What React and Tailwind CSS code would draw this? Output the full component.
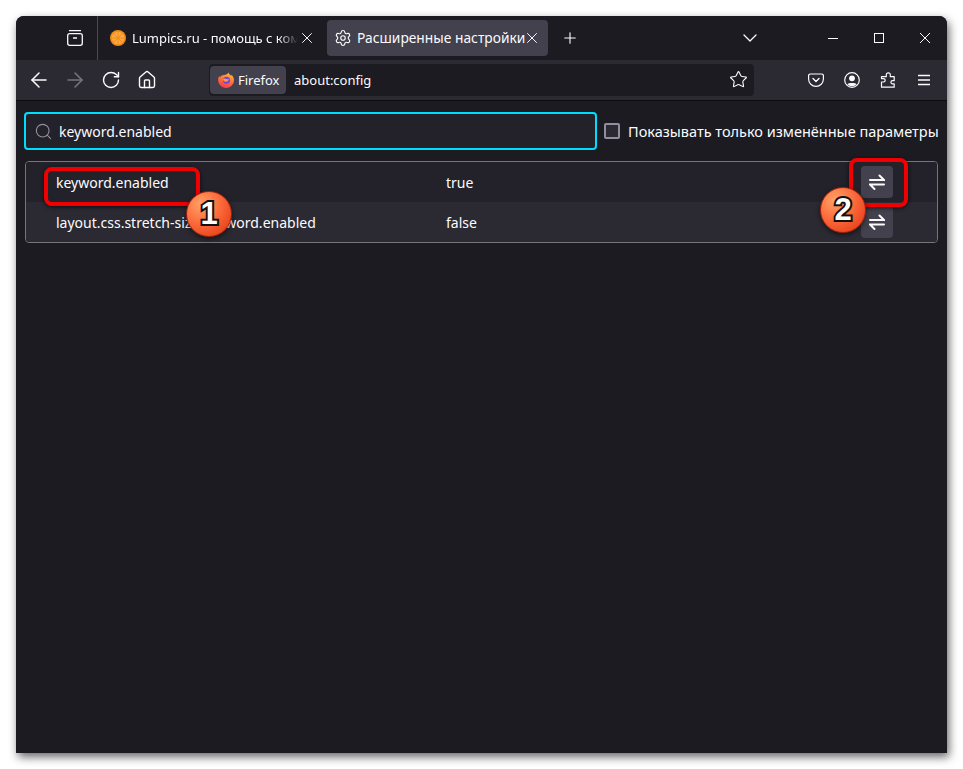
import { ArrowLeft, ArrowRight, ChevronDown, House, Plus, RotateCw, Search, Settings, Star, X } from "lucide-react";

function ViewIcon() {
  return (
    <svg width="18" height="18" viewBox="0 0 18 18" fill="none" stroke="#fbfbfe" strokeWidth="1.3">
      <path d="M3.5 1.700h11" strokeLinecap="round" />
      <rect x="1.700" y="4.700" width="14.600" height="11.600" rx="2" />
      <path d="M7 9h4" strokeWidth="1.500" />
    </svg>
  );
}

function OrangeIcon() {
  return (
    <svg width="16" height="16" viewBox="0 0 16 16">
      <circle cx="8" cy="8" r="8" fill="#ef8a1a" />
      <circle cx="8" cy="8" r="6.300" fill="#ffa93f" />
      <path d="M8 1.500v13M1.500 8h13M3.400 3.400l9.200 9.200M12.600 3.400l-9.200 9.200" stroke="#ef8a1a" strokeWidth="0.900" />
    </svg>
  );
}

function FirefoxIcon() {
  return (
    <svg width="16" height="16" viewBox="0 0 16 16">
      <defs>
        <linearGradient id="fx" x1="0.7" y1="0" x2="0.3" y2="1">
          <stop offset="0" stopColor="#ffc02e" />
          <stop offset="0.5" stopColor="#ff7139" />
          <stop offset="1" stopColor="#f0384f" />
        </linearGradient>
      </defs>
      <path d="M10.500.5c.3 1.700 1.600 2 2.600 3.200.3-.3.4-.5.5-.9C15 4.300 16 6 16 8.200A7.900 7.800 0 0 1 .1 8.200C.1 6.400.7 5 1.400 4c.1.600.4 1 .8 1.300C3 3.400 4.600 3.300 6 3.100 8 2.800 9.800 2 10.500.5z" fill="url(#fx)" />
      <circle cx="8.500" cy="8.300" r="3.500" fill="#7543e3" />
      <path d="M5 7.400c1-1.200 2.200-.9 3.300-.4 1.200.5 2 .3 2.600-.2-.2 2-1.500 3-3 2.900C6.500 9.600 5.500 8.800 5 7.400z" fill="#ff9a3c" />
    </svg>
  );
}

function PocketIcon() {
  return (
    <svg width="16" height="16" viewBox="0 0 16 16" fill="none" stroke="#fbfbfe" strokeWidth="1.200">
      <path d="M2.200 2h11.600A1.600 1.600 0 0 1 15.400 3.600V7A7.400 7.400 0 0 1 .6 7V3.600A1.600 1.600 0 0 1 2.200 2z" />
      <path d="M5 6.500l3 3 3-3" strokeLinecap="round" strokeLinejoin="round" strokeWidth="1.400" />
    </svg>
  );
}

function ProfileIcon() {
  return (
    <svg width="16" height="16" viewBox="0 0 16 16" fill="none">
      <circle cx="8" cy="8" r="7.300" stroke="#fbfbfe" strokeWidth="1.200" />
      <circle cx="8" cy="6.300" r="2.900" fill="#fbfbfe" />
      <path d="M3.300 12.200c1-1.700 8.400-1.700 9.400 0-1.400 1.300-2.900 2-4.700 2s-3.300-.7-4.700-2z" fill="#fbfbfe" />
    </svg>
  );
}

function PuzzleIcon() {
  return (
    <svg width="16" height="16" viewBox="0 0 16 16" fill="none" stroke="#fbfbfe" strokeWidth="1.200" strokeLinejoin="round">
      <path d="M1.500 15.200V10h2a1.700 1.700 0 0 0 0-3.400h-2V4.700h4.800V3a2 2 0 0 1 2-2.200 2 2 0 0 1 2 2.200v1.700h3.900v4h-1.700a1.600 1.600 0 0 0 0 3.200h1.700v3.300z" />
    </svg>
  );
}

function MenuIcon() {
  return (
    <svg width="16" height="16" viewBox="0 0 16 16" stroke="#fbfbfe" strokeWidth="1.300">
      <path d="M2 3.500h12M2 8h12M2 12.500h12" />
    </svg>
  );
}

function ToggleIcon() {
  return (
    <svg width="16" height="16" viewBox="0 0 16 16" fill="none" stroke="#fbfbfe" strokeWidth="2" strokeLinecap="round">
      <path d="M1 6h14l-4.500-4.500" />
      <path d="M15 10.500H1l4.500 4.500" />
    </svg>
  );
}

function WindowControl({ className, children }) {
  return (
    <div className={`flex justify-center ${className}`}>
      <svg width="12" height="12" viewBox="0 0 12 12" fill="none" stroke="#fbfbfe" strokeWidth="1">
        {children}
      </svg>
    </div>
  );
}

function NavButton({ children, className = "" }) {
  return <div className={`flex h-8 w-9 shrink-0 items-center justify-center ${className}`}>{children}</div>;
}

function Badge({ label, className }) {
  return (
    <div
      className={`absolute flex h-[46px] w-[46px] items-center justify-center rounded-full border border-[#a5200a] bg-[radial-gradient(circle_at_32%_28%,#ffa268_0%,#fb6a3a_45%,#e0300f_100%)] font-['Liberation_Sans',sans-serif] text-[31px] font-bold text-white shadow-[0_2px_5px_rgba(0,0,0,0.55)] [-webkit-text-stroke:4px_#111] [paint-order:stroke_fill] ${className}`}
    >
      {label}
    </div>
  );
}

function ConfigRow({ name, value, className }) {
  return (
    <div className={`flex h-10 items-center pl-[30px] pr-[44px] ${className}`}>
      <div className="w-[390px] shrink-0 whitespace-nowrap pt-px">{name}</div>
      <div className="flex-1 pt-px">{value}</div>
      <div className="flex h-8 w-8 items-center justify-center rounded bg-[#42414d]">
        <ToggleIcon />
      </div>
    </div>
  );
}

export default function App() {
  return (
    <div className="h-[769px] w-[963px] overflow-hidden bg-white p-4 font-['Noto_Sans',sans-serif] text-[14px] text-[#fbfbfe]">
      <div className="relative flex h-[737px] w-[931px] flex-col overflow-hidden rounded-t-lg bg-[#1c1b22] shadow-[2px_4px_10px_rgba(0,0,0,0.6)]">
        {/* tab strip */}
        <div className="flex h-11 shrink-0 items-center bg-[#1c1b22] text-[13px]">
          <div className="flex h-full w-[82px] shrink-0 items-center justify-end border-r border-[#4a4951] pr-[13px]">
            <ViewIcon />
          </div>
          <div className="flex h-full w-[229px] shrink-0 items-center pl-[12px]">
            <OrangeIcon />
            <span className="ml-[6px] w-[166px] overflow-hidden whitespace-nowrap pt-px [mask-image:linear-gradient(to_right,black_88%,transparent)]">
              Lumpics.ru - помощь с компьютером
            </span>
            <X size={18} strokeWidth={1.300} className="shrink-0" />
          </div>
          <div className="flex h-9 w-[221px] shrink-0 items-center rounded bg-[#42414d] pl-[7px]">
            <Settings size={18} strokeWidth={1.500} className="shrink-0" />
            <span className="ml-[5px] w-[166px] whitespace-nowrap pt-px text-[13.8px]">Расширенные настройки</span>
            <X size={18} strokeWidth={1.300} className="shrink-0" />
          </div>
          <Plus size={18} strokeWidth={1.500} className="ml-[13px] shrink-0" />
          <ChevronDown size={24} strokeWidth={1.300} className="ml-[159px] shrink-0" />
          <div className="ml-auto flex">
            <WindowControl className="w-[46px]"><path d="M1 6.500h10" /></WindowControl>
            <WindowControl className="w-[46px]"><rect x="1.500" y="1.500" width="9" height="9" /></WindowControl>
            <WindowControl className="w-[45px]"><path d="M1 1l10 10M11 1L1 11" /></WindowControl>
          </div>
        </div>

        {/* navigation bar */}
        <div className="flex h-[41px] shrink-0 items-center border-b border-[#0c0c0d] bg-[#2b2a33] pb-px pl-[5px] pr-[5px]">
          <NavButton><ArrowLeft size={24} strokeWidth={1.500} /></NavButton>
          <NavButton><ArrowRight size={24} strokeWidth={1.500} className="text-[#77767d]" /></NavButton>
          <NavButton><RotateCw size={20} strokeWidth={1.700} /></NavButton>
          <NavButton><House size={20} strokeWidth={1.700} /></NavButton>
          <div className="ml-[44px] flex h-8 w-[545px] shrink-0 items-center rounded bg-[#1c1b22] pl-[1px] pr-[6px] text-[13px]">
            <div className="flex h-7 w-[76px] items-center gap-[4px] rounded bg-[#42414d] pl-2">
              <FirefoxIcon />
              <span className="pt-[2px]">Firefox</span>
            </div>
            <span className="ml-2 pt-[2px]">about:config</span>
            <Star size={19} strokeWidth={1.400} className="ml-auto" />
          </div>
          <NavButton className="ml-[44px]"><PocketIcon /></NavButton>
          <NavButton><ProfileIcon /></NavButton>
          <NavButton><PuzzleIcon /></NavButton>
          <NavButton><MenuIcon /></NavButton>
        </div>

        {/* about:config */}
        <div className="flex-1 px-[8px] pt-[11px]">
          <div className="flex items-center">
            <div className="flex h-[38px] w-[573px] items-center rounded border-2 border-[#00ddff] bg-[#23222b] pl-[8px]">
              <Search size={19} strokeWidth={1.400} className="shrink-0 text-[#8f8f9d]" />
              <span className="ml-[6px] pt-px">keyword.enabled</span>
            </div>
            <div className="ml-[7px] h-4 w-4 rounded-[2px] border-2 border-[#8f8f9d] bg-[#2b2a33]" />
            <span className="ml-2 whitespace-nowrap pt-px text-[14.5px]">Показывать только изменённые параметры</span>
          </div>
          <div className="ml-px mt-[11px] w-[913px] overflow-hidden rounded border border-[#76757e]">
            <ConfigRow name="keyword.enabled" value="true" className="bg-[#23222b]" />
            <ConfigRow name="layout.css.stretch-size.keyword.enabled" value="false" className="bg-[#2b2a33]" />
          </div>
        </div>

        {/* annotations */}
        <div className="absolute left-[28px] top-[151px] h-[39px] w-[156px] rounded-lg border-4 border-[#f00000] shadow-[0_1px_4px_rgba(0,0,0,0.7)]" />
        <div className="absolute left-[833px] top-[142px] h-[49px] w-[59px] rounded-lg border-4 border-[#f00000] shadow-[0_1px_4px_rgba(0,0,0,0.7)]" />
        <Badge label="1" className="left-[170px] top-[175px]" />
        <Badge label="2" className="left-[804px] top-[171px]" />
      </div>
    </div>
  );
}
